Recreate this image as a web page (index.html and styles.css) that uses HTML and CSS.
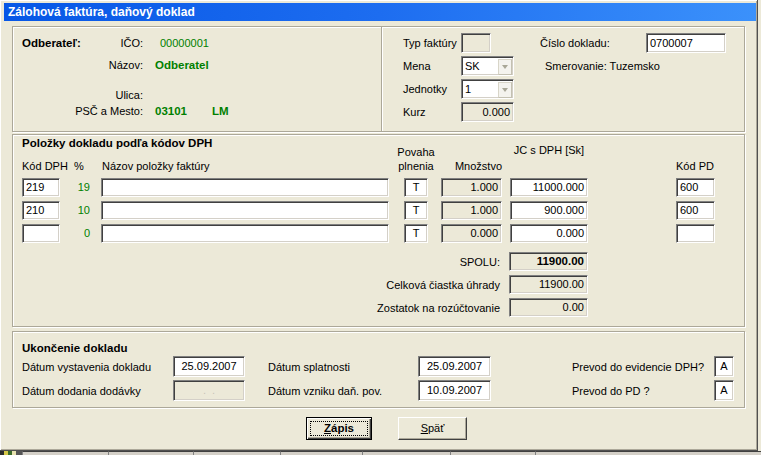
FILE: index.html
```html
<!DOCTYPE html>
<html lang="sk">
<head>
<meta charset="utf-8">
<title>Zálohová faktúra, daňový doklad</title>
<link rel="stylesheet" href="styles.css">
</head>
<body>
<div class="screen">
  <div class="window">
    <div class="titlebar">Zálohová faktúra, daňový doklad</div>

    <div class="top-row">
      <section class="group g-cust">
        <div class="cust-grid">
          <div class="cust-lbl first"><b>Odberateľ:</b><span>IČO:</span></div>
          <span class="green ico">00000001</span>
          <div class="cust-lbl">Názov:</div>
          <b class="green">Odberatel</b>
          <div class="cust-lbl">Ulica:</div>
          <span></span>
          <div class="cust-lbl">PSČ a Mesto:</div>
          <div class="green city"><b>03101</b><b>LM</b></div>
        </div>
      </section>
      <section class="group g-doc">
        <div class="doc-grid">
          <span>Typ faktúry</span>
          <span class="field dis w30"></span>
          <span>Číslo dokladu:</span>
          <span class="field w80">0700007</span>

          <span>Mena</span>
          <span class="field combo"><span>SK</span><i class="drop"></i></span>
          <span class="smer">Smerovanie: Tuzemsko</span>

          <span>Jednotky</span>
          <span class="field combo"><span>1</span><i class="drop"></i></span>
          <span class="span2"></span>

          <span>Kurz</span>
          <span class="field dis w53 num">0.000</span>
        </div>
      </section>
    </div>

    <section class="group g-items">
      <div class="items-head">
        <div class="ih-left">
          <b class="sec-title">Položky dokladu podľa kódov DPH</b>
          <div class="ih-cols"><span class="hc-kod">Kód DPH</span><span class="hc-pct">%</span><span>Názov položky faktúry</span></div>
        </div>
        <div class="ih-povaha">Povaha<br>plnenia</div>
        <div class="ih-mn">Množstvo</div>
        <div class="ih-jc">JC s DPH [Sk]</div>
        <div class="ih-pd">Kód PD</div>
      </div>

      <div class="rows">
        <div class="row">
          <span class="field c-kod">219</span>
          <span class="green c-pct">19</span>
          <span class="field c-name"></span>
          <span class="field c-t">T</span>
          <span class="field dis num c-mn">1.000</span>
          <span class="field num c-jc">11000.000</span>
          <span class="field c-pd">600</span>
        </div>
        <div class="row">
          <span class="field c-kod">210</span>
          <span class="green c-pct">10</span>
          <span class="field c-name"></span>
          <span class="field c-t">T</span>
          <span class="field dis num c-mn">1.000</span>
          <span class="field num c-jc">900.000</span>
          <span class="field c-pd">600</span>
        </div>
        <div class="row">
          <span class="field c-kod"></span>
          <span class="green c-pct">0</span>
          <span class="field c-name"></span>
          <span class="field c-t">T</span>
          <span class="field dis num c-mn">0.000</span>
          <span class="field num c-jc">0.000</span>
          <span class="field c-pd"></span>
        </div>
      </div>

      <div class="totals">
        <div class="trow"><span>SPOLU:</span><b class="field dis num t-box">11900.00</b></div>
        <div class="trow"><span>Celková čiastka úhrady</span><span class="field dis num t-box">11900.00</span></div>
        <div class="trow"><span>Zostatok na rozúčtovanie</span><span class="field dis num t-box">0.00</span></div>
      </div>
    </section>

    <section class="group g-end">
      <b class="sec-title">Ukončenie dokladu</b>
      <div class="end-grid">
        <span>Dátum vystavenia dokladu</span>
        <span class="field ctr w72">25.09.2007</span>
        <span class="l2">Dátum splatnosti</span>
        <span class="field ctr w73">25.09.2007</span>
        <span class="l3">Prevod do evidencie DPH?</span>
        <span class="field ctr w20">A</span>

        <span>Dátum dodania dodávky</span>
        <span class="field dis ctr w72 faint">.&nbsp;&nbsp;.</span>
        <span class="l2">Dátum vzniku daň. pov.</span>
        <span class="field ctr w73">10.09.2007</span>
        <span class="l3">Prevod do PD ?</span>
        <span class="field ctr w20">A</span>
      </div>
    </section>

    <div class="buttons">
      <button class="btn default" type="button"><span class="focus"><b><u>Z</u>ápis</b></span></button>
      <button class="btn" type="button"><u>S</u>päť</button>
    </div>
  </div>
  <div class="under">
    <span class="u-icon"></span><span class="u-cell w1"></span><span class="u-cell w2"></span><span class="u-cell w3"></span><span class="u-cell w4"></span><span class="u-cell w5"></span><span class="u-cell w6"></span><span class="u-cell"></span>
  </div>
</div>
</body>
</html>
```

FILE: styles.css
```css
html, body {
  margin: 0;
  padding: 0;
}

body {
  background: #ECE9D8;
  font-family: "Liberation Sans", Arial, sans-serif;
  font-size: 11px;
  color: #000;
}

.screen {
  width: 761px;
  height: 455px;
  overflow: hidden;
  background: #ECE9D8;
}

.window {
  box-sizing: border-box;
  width: 758px;
  height: 451px;
  padding: 3px 1px 0 4px;
  background: #ECE9D8;
  border-right: 1px solid #505050;
  border-bottom: 1px solid #505050;
  box-shadow: inset 1px 1px 0 #fff, inset -1px -1px 0 #ACA899;
}

.titlebar {
  height: 18px;
  line-height: 18px;
  padding-left: 4px;
  color: #fff;
  font-weight: bold;
  font-size: 12px;
  background: linear-gradient(90deg, #0757E6 0%, #1D6DF0 50%, #3B91FB 100%);
  white-space: nowrap;
}

/* ---------- group boxes ---------- */
.group {
  box-sizing: border-box;
  border: 1px solid #ACA899;
  box-shadow: inset 1px 1px 0 #fff, 1px 1px 0 #fff;
}

.top-row {
  display: flex;
  margin: 5px 0 0 8px;
  height: 106px;
}

.g-cust {
  width: 370px;
  height: 106px;
  padding: 9px 0 0 9px;
}

.g-doc {
  width: 363px;
  height: 106px;
  border-left: none;
  box-shadow: inset 0 1px 0 #fff, 1px 1px 0 #fff;
  padding: 6px 0 0 21px;
}

.green {
  color: #008000;
}

b {
  font-weight: bold;
  font-size: 11.5px;
}

/* customer */
.cust-grid {
  display: grid;
  grid-template-columns: 121px 1fr;
  grid-template-rows: 22px 30px 16px 14px;
  column-gap: 12px;
  line-height: 14px;
}

.cust-lbl {
  text-align: right;
}

.cust-lbl.first {
  display: flex;
  justify-content: space-between;
  text-align: left;
}

.ico {
  margin-left: 5px;
}

.city {
  display: flex;
  gap: 25px;
}

/* document header */
.doc-grid {
  display: grid;
  grid-template-columns: 58px 79px 106px 80px;
  grid-auto-rows: 20px;
  row-gap: 3px;
  align-items: center;
  line-height: 14px;
}

.smer {
  grid-column: span 2;
  padding-left: 5px;
}

.span2 {
  grid-column: span 2;
}

/* ---------- fields ---------- */
.field {
  box-sizing: border-box;
  display: block;
  height: 19px;
  line-height: 15px;
  padding: 1px 3px 0 3px;
  background: #fff;
  border: 1px solid;
  border-color: #808080 #fff #fff #808080;
  box-shadow: inset 1px 1px 0 #404040, inset -1px -1px 0 #D4D0C8;
  white-space: nowrap;
  overflow: hidden;
  font-size: 11px;
  font-weight: normal;
}

.doc-grid .field {
  height: 20px;
  line-height: 16px;
}

.field.dis {
  background: #ECE9D8;
}

.field.num {
  text-align: right;
}

.field.ctr {
  text-align: center;
}

.w30 { width: 30px; }
.w53 { width: 53px; }
.w80 { width: 80px; }
.w72 { width: 72px; }
.w73 { width: 73px; }
.w20 { width: 20px; padding: 1px 0 0 0; }

.combo {
  width: 53px;
  display: flex;
  justify-content: space-between;
  padding-right: 1px;
}

.drop {
  position: relative;
  box-sizing: border-box;
  width: 14px;
  height: 16px;
  margin-top: 1px;
  background: #F4F3EE;
  border: 1px solid #D8D5C8;
  border-right-color: #C4C1B2;
  border-bottom-color: #C4C1B2;
}

.drop::after {
  content: "";
  position: absolute;
  left: 3px;
  top: 5px;
  border-left: 3.5px solid transparent;
  border-right: 3.5px solid transparent;
  border-top: 4px solid #A9A797;
}

/* ---------- items ---------- */
.g-items {
  width: 733px;
  height: 193px;
  margin: 2px 0 0 8px;
  padding: 1px 0 0 9px;
}

.sec-title {
  display: block;
  line-height: 14px;
  font-size: 11.5px;
}

.items-head {
  display: flex;
  height: 37px;
  align-items: flex-end;
  line-height: 14px;
}

.ih-left {
  width: 369px;
  height: 37px;
  display: flex;
  flex-direction: column;
  justify-content: space-between;
}

.ih-cols {
  display: flex;
}

.hc-kod { width: 52px; }
.hc-pct { width: 28px; }

.ih-povaha {
  width: 50px;
  text-align: center;
}

.ih-mn {
  width: 61px;
  text-align: right;
}

.ih-jc {
  width: 78px;
  margin-left: 8px;
  text-align: center;
  align-self: flex-start;
  margin-top: 7px;
}

.ih-pd {
  margin-left: 88px;
}

.rows {
  display: flex;
  flex-direction: column;
  gap: 4px;
  margin-top: 5px;
}

.row {
  display: flex;
  align-items: center;
}

.c-kod { width: 38px; }
.c-pct {
  width: 41px;
  box-sizing: border-box;
  padding-right: 11px;
  text-align: right;
  line-height: 19px;
}
.c-name { width: 288px; }
.c-t { width: 24px; margin-left: 15px; text-align: center; padding: 1px 0 0 0; }
.c-mn { width: 61px; margin-left: 13px; }
.c-jc { width: 78px; margin-left: 8px; }
.c-pd { width: 39px; margin-left: 88px; }

.totals {
  display: flex;
  flex-direction: column;
  gap: 4px;
  margin-top: 9px;
  width: 566px;
}

.trow {
  display: flex;
  justify-content: flex-end;
  align-items: center;
  line-height: 14px;
}

.trow > span:first-child {
  margin-right: 9px;
}

.t-box {
  width: 79px;
}

b.t-box {
  font-weight: bold;
  font-size: 11.5px;
}

/* ---------- end ---------- */
.g-end {
  width: 733px;
  height: 77px;
  margin: 4px 0 0 8px;
  padding: 9px 0 0 9px;
}

.end-grid {
  display: grid;
  grid-template-columns: 151px 72px 173px 73px 223px 20px;
  grid-auto-rows: 21px;
  row-gap: 3px;
  align-items: center;
  margin-top: 1px;
  line-height: 14px;
}

.end-grid .field {
  height: 21px;
  line-height: 17px;
}

.l2 { padding-left: 23px; }
.l3 { padding-left: 81px; }

.faint {
  color: #C8C5B8;
}

/* ---------- buttons ---------- */
.buttons {
  display: flex;
  margin-top: 9px;
  padding-left: 302px;
}

.btn {
  box-sizing: border-box;
  width: 69px;
  height: 23px;
  margin: 0;
  padding: 0;
  font-family: "Liberation Sans", Arial, sans-serif;
  font-size: 11px;
  color: #000;
  background: #ECE9D8;
  border: 1px solid;
  border-color: #fff #404040 #404040 #fff;
  box-shadow: inset -1px -1px 0 #ACA899;
  line-height: 19px;
}

.btn + .btn {
  margin-left: 26px;
}

.btn.default {
  width: 66px;
  border: 1px solid #000;
  box-shadow: inset 1px 1px 0 #fff, inset -1px -1px 0 #404040, inset -2px -2px 0 #ACA899;
  padding: 3px;
}

.focus {
  display: block;
  height: 15px;
  line-height: 13px;
  border: 1px dotted #000;
  box-sizing: border-box;
}

.focus b {
  font-size: 11.5px;
}

/* ---------- window underneath ---------- */
.under {
  display: flex;
  height: 4px;
  background: #D4D0C8;
}

.u-icon {
  width: 22px;
  background: linear-gradient(90deg, #2B2B2B 0 4px, #D6C84A 4px 8px, #3A6A2A 8px 12px, #E8E2B0 12px 16px, #555 16px 22px);
}

.u-cell {
  box-sizing: border-box;
  border-top: 1px solid #404040;
  border-left: 1px solid #808080;
  flex: 1;
}

.u-cell.w1 { flex: 0 0 86px; }
.u-cell.w2 { flex: 0 0 85px; }
.u-cell.w3 { flex: 0 0 87px; }
.u-cell.w4 { flex: 0 0 82px; }
.u-cell.w5 { flex: 0 0 88px; }
.u-cell.w6 { flex: 0 0 85px; }
```
